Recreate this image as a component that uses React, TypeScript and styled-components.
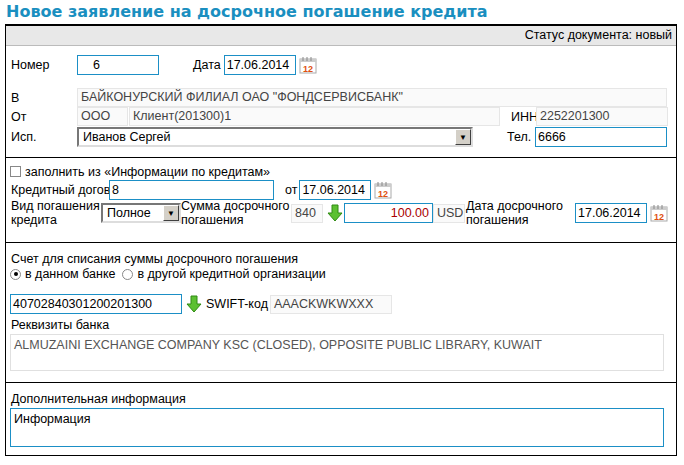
import React from "react";
import styled, { createGlobalStyle } from "styled-components";

const G = createGlobalStyle`
  body{margin:0;background:#fff;font-family:"Liberation Sans Narrow","Liberation Sans",Arial,sans-serif;font-size:12.5px;color:#000;}
  *{box-sizing:border-box;}
`;
const Page = styled.div`padding:2px 8px 0 5px;width:684px;`;
const Title = styled.div`color:#1a8fc0;font:bold 16px "DejaVu Sans",Verdana,sans-serif;height:22px;line-height:20px;padding-left:1px;`;
const Panel = styled.div`border:1px solid #000;border-top:2px solid #000;width:672px;height:432px;`;
const Status = styled.div`background:#e8e8e8;border-bottom:1px solid #bbb;height:20px;line-height:19px;text-align:right;padding-right:4px;`;
const Section = styled.div<{pt?:number;pb?:number}>`padding:${p=>p.pt??0}px 4px ${p=>p.pb??0}px 4px;border-bottom:${p=>p.pb!==undefined?"1px solid #000":"none"};`;
const Row = styled.div<{h?:number;mt?:number}>`display:flex;align-items:center;height:${p=>p.h??19}px;margin-top:${p=>p.mt??0}px;`;
const Label = styled.div<{w?:number;ml?:number}>`width:${p=>p.w?p.w+"px":"auto"};margin-left:${p=>p.ml??0}px;flex-shrink:0;line-height:14px;white-space:nowrap;`;
const Input = styled.div<{w:number;ml?:number;h?:number;right?:boolean;red?:boolean;pl?:number}>`
  width:${p=>p.w}px;height:${p=>p.h??20}px;margin-left:${p=>p.ml??0}px;border:1px solid #1b8fc6;background:#fff;
  padding:0 3px 0 ${p=>p.pl??2}px;line-height:18px;text-align:${p=>p.right?"right":"left"};color:${p=>p.red?"#a00":"#000"};flex-shrink:0;white-space:nowrap;`;
const RO = styled.div<{w:number;ml?:number}>`width:${p=>p.w}px;margin-left:${p=>p.ml??0}px;height:19px;border:1px solid #e6e6e6;background:#fafafa;color:#444;padding-left:3px;line-height:17px;flex-shrink:0;white-space:nowrap;overflow:hidden;`;
const Select = styled.div<{w:number;ml?:number}>`width:${p=>p.w}px;margin-left:${p=>p.ml??0}px;height:20px;border:2px solid;border-color:#777 #ddd #ddd #777;display:flex;align-items:center;padding-left:4px;justify-content:space-between;flex-shrink:0;`;
const Arrow = styled.div`width:16px;height:16px;background:#d4d0c8;border:1px solid;border-color:#fff #404040 #404040 #fff;display:flex;align-items:center;justify-content:center;font-size:8px;`;
const Area = styled.div<{h:number;gray?:boolean}>`width:654px;height:${p=>p.h}px;margin-top:1px;border:1px solid ${p=>p.gray?"#e0e0e0":"#1b8fc6"};color:${p=>p.gray?"#555":"#000"};padding:3px 3px;line-height:14px;`;
const Box = styled.span<{round?:boolean;on?:boolean}>`display:inline-flex;width:11px;height:11px;border:1px solid #888;background:#fff;border-radius:${p=>p.round?"50%":"0"};margin-right:4px;align-items:center;justify-content:center;
  &::after{content:"";display:${p=>p.on?"block":"none"};width:4px;height:4px;border-radius:50%;background:#000;}`;
const Cal = () => (
  <svg width="18" height="18" viewBox="0 0 18 18" style={{marginLeft:3,flexShrink:0}}>
    <rect x="1" y="3" width="16" height="14" fill="#fff" stroke="#aaa"/>
    <rect x="1" y="3" width="16" height="3" fill="#ccc"/>
    <path d="M4 1v4M8 1v4M12 1v4" stroke="#888"/>
    <text x="9" y="15.5" fontSize="9" fontWeight="bold" textAnchor="middle" fill="#e05010" fontFamily="Liberation Sans">12</text>
  </svg>
);
const Down = ({ml=4}:{ml?:number}) => (
  <svg width="16" height="18" viewBox="0 0 16 18" style={{marginLeft:ml,flexShrink:0}}>
    <path d="M5 1h6v8h4l-7 8-7-8h4z" fill="#5cc032" stroke="#2e8a12"/>
  </svg>
);

export default function App(){
  return (<Page><G/>
    <Title>Новое заявление на досрочное погашение кредита</Title>
    <Panel>
      <Status>Статус документа: новый</Status>
      <Section pt={9} pb={10}>
        <Row h={20}><Label w={66} ml={1}>Номер</Label><Input w={82} pl={15}>6</Input><Label ml={34}>Дата</Label><Input w={72} ml={3}>17.06.2014</Input><Cal/></Row>
        <Row mt={13}><Label w={66} ml={1}>В</Label><RO w={590}>БАЙКОНУРСКИЙ ФИЛИАЛ ОАО "ФОНДСЕРВИСБАНК"</RO></Row>
        <Row><Label w={66} ml={1}>От</Label><RO w={51}>ООО</RO><RO w={371} ml={1}>Клиент(201300)1</RO><Label w={25} ml={11}>ИНН</Label><RO w={132}>2252201300</RO></Row>
        <Row h={20} mt={1}><Label w={66} ml={1}>Исп.</Label><Select w={396}>Иванов Сергей<Arrow>▼</Arrow></Select><Label w={28} ml={34}>Тел.</Label><Input w={132}>6666</Input></Row>
      </Section>
      <Section pt={5} pb={17}>
        <Row h={17}><Box/>заполнить из «Информации по кредитам»</Row>
        <Row h={20}><Label w={98} ml={1}>Кредитный договор №</Label><Input w={165}>8</Input><Label ml={11}>от</Label><Input w={72} ml={2}>17.06.2014</Input><Cal/></Row>
        <Row h={24} mt={1}><Label w={90} ml={1}>Вид погашения<br/>кредита</Label><Select w={80}>Полное<Arrow>▼</Arrow></Select><Label w={110}>Сумма досрочного<br/>погашения</Label><RO w={32}>840</RO><Down/><Input w={89} ml={1} right red>100.00</Input><RO w={32} ml={0}>USD</RO><Label w={109} ml={1}>Дата досрочного<br/>погашения</Label><Input w={72}>17.06.2014</Input><Cal/></Row>
      </Section>
      <Section pt={8} pb={11}>
        <Row h={15}><Label ml={1}>Счет для списания суммы досрочного погашения</Label></Row>
        <Row h={16}><Box round on/>в данном банке&nbsp;&nbsp;<Box round/>в другой кредитной организации</Row>
        <Row h={20} mt={12}><Input w={172}>40702840301200201300</Input><Down/><Label ml={4}>SWIFT-код</Label><RO w={122} ml={2}>AAACKWKWXXX</RO></Row>
        <Row h={16} mt={3}><Label ml={1}>Реквизиты банка</Label></Row>
        <Area h={37} gray>ALMUZAINI EXCHANGE COMPANY KSC (CLOSED), OPPOSITE PUBLIC LIBRARY, KUWAIT</Area>
      </Section>
      <Section pt={8}>
        <Row h={16}><Label ml={1}>Дополнительная информация</Label></Row>
        <Area h={39}>Информация</Area>
      </Section>
    </Panel>
  </Page>);
}
